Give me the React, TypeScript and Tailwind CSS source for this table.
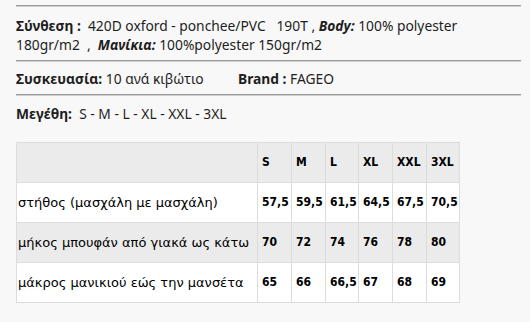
import React from "react";

const sizes = ["S", "M", "L", "XL", "XXL", "3XL"];
const rows: { label: string; vals: string[]; bg: string }[] = [
  { label: "στήθος (μασχάλη με μασχάλη)", vals: ["57,5", "59,5", "61,5", "64,5", "67,5", "70,5"], bg: "bg-white" },
  { label: "μήκος μπουφάν από γιακά ως κάτω", vals: ["70", "72", "74", "76", "78", "80"], bg: "bg-[#ebebeb]" },
  { label: "μάκρος μανικιού εώς την μανσέτα", vals: ["65", "66", "66,5", "67", "68", "69"], bg: "bg-white" },
];
const colW = ["w-[34px]", "w-[34px]", "w-[33px]", "w-[34px]", "w-[34px]", "w-[33px]"];

function Rule() {
  return <div className="h-0 border-t border-b border-t-[#9c9c9c] border-b-[#cfcfcf]" />;
}

export default function App() {
  return (
    <div className="w-[530px] h-[322px] bg-[#f8f8f8] overflow-hidden text-[#1e1e1e]">
      <div className="pl-4 pt-[5px] w-[521px] font-['Noto_Sans',sans-serif] text-[13.8px] leading-[19px]">
        <Rule />
        <div className="mt-[9px] mb-[6px] whitespace-pre">
          <span className="font-bold">Σύνθεση :</span>{"  420D oxford - ponchee/PVC   190T , "}
          <span className="font-bold italic">Body:</span>{" 100% polyester"}
          <br />
          {"180gr/m2  ,  "}
          <span className="font-bold italic">Μανίκια:</span>{" 100%polyester 150gr/m2"}
        </div>
        <Rule />
        <div className="mt-[7px] mb-[6px] whitespace-pre flex">
          <div className="w-[222px]">
            <span className="font-bold">Συσκευασία:</span>{" 10 ανά κιβώτιο"}
          </div>
          <div>
            <span className="font-bold">Brand :</span>{" FAGEO"}
          </div>
        </div>
        <Rule />
        <div className="mt-[8px] whitespace-pre">
          <span className="font-bold">Μεγέθη:</span>{"  S - M - L - XL - XXL - 3XL"}
        </div>
        <table className="mt-[19px] border-collapse text-black">
          <tbody>
            <tr className="bg-[#ebebeb] h-[40px]">
              <td className="w-[241px] border border-[#dcdcdc] p-0"></td>
              {sizes.map((s, i) => (
                <td key={s} className={`${colW[i]} border border-[#dcdcdc] pl-[4px] p-0 font-bold text-left font-['DejaVu_Sans_Condensed','DejaVu_Sans',sans-serif] text-[12px]`}>
                  {s}
                </td>
              ))}
            </tr>
            {rows.map((r) => (
              <tr key={r.label} className={`${r.bg} h-[40px]`}>
                <td className="border border-[#dcdcdc] pl-[1px] p-0 whitespace-nowrap font-['DejaVu_Sans',sans-serif] text-[13px]">{r.label}</td>
                {r.vals.map((v, i) => (
                  <td key={i} className={`${colW[i]} border border-[#dcdcdc] pl-[4px] p-0 font-bold whitespace-nowrap font-['DejaVu_Sans_Condensed','DejaVu_Sans',sans-serif] text-[12px]`}>
                    {v}
                  </td>
                ))}
              </tr>
            ))}
          </tbody>
        </table>
      </div>
    </div>
  );
}
